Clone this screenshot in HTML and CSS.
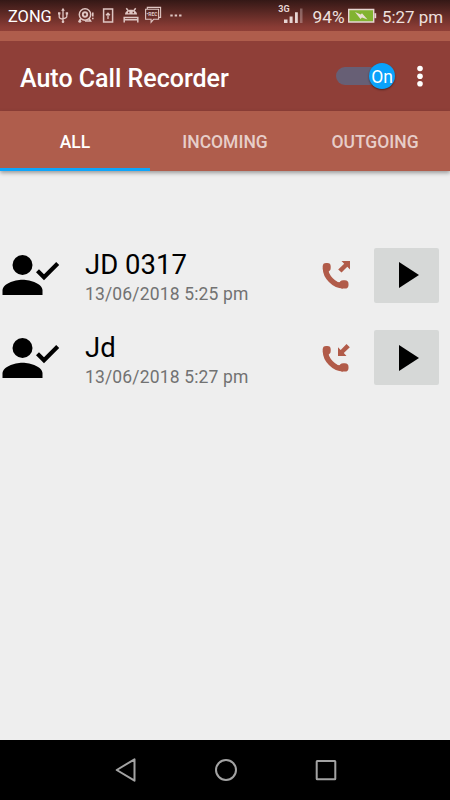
FILE: index.html
```html
<!DOCTYPE html>
<html lang="en">
<head>
<meta charset="utf-8">
<title>Auto Call Recorder</title>
<link rel="stylesheet" href="styles.css">
</head>
<body>
<svg class="defs" aria-hidden="true">
  <symbol id="person" viewBox="0 0 60 50">
    <circle cx="22.5" cy="15" r="10"/>
    <path d="M2.500 45v-4.500C2.500 34 14 29.800 22.500 29.800S42.500 34 42.500 40.500V45z"/>
    <path d="M37.500 20.700l6.500 6.500L57.700 13.500" fill="none" stroke="#000" stroke-width="4.200"/>
  </symbol>
  <symbol id="handset" viewBox="0 0 30 30">
    <path d="M4.500 8.500C4.500 16.500 13 25.900 22 25.900" fill="none" stroke="#b15b49" stroke-width="5.400"/>
    <rect x="1.700" y="3" width="8" height="8.400" rx="3.400"/>
    <rect x="18.500" y="20.300" width="9" height="8.300" rx="3.700"/>
    <path d="M8.800 9.500C6.800 11 7 12.800 8.200 14.500L5 13zM20 21.200C18 23 16.500 22.500 15 21.500L17 26z"/>
  </symbol>
  <symbol id="play" viewBox="0 0 20 26"><path d="M0 0v26L20 13z"/></symbol>
</svg>
<header class="status">
  <div class="status-left">
    <span class="carrier">ZONG</span>
    <svg class="notices" viewBox="56 0 130 31" fill="none" stroke="#dfc6c3" stroke-width="1.300">
      <path d="M63 9.500v13M59.200 13.500v3.300q0 2 3.800 2.300M66.800 13v3.300q0 2-3.800 2.300"/>
      <path d="M63 7.800l-1.800 3h3.600z" fill="#dfc6c3" stroke="none"/>
      <circle cx="63" cy="21.700" r="1.300" fill="#dfc6c3" stroke="none"/>
      <path d="M58 12.200h2.400v2.300H58zM65.700 12.200h2.400v2.300h-2.400z" fill="#dfc6c3" stroke="none"/>
      <circle cx="85" cy="14.500" r="5.700" stroke-width="1.500"/><circle cx="85" cy="14.500" r="2.200" stroke-width="1.900"/>
      <path d="M89 18.500l1.500 2.500h-5.500M81 18.500l-1.500 2M92.800 12.500v4M92.800 17.800v1.500" stroke-width="1.600"/>
      <circle cx="79.800" cy="21.200" r="1.500" fill="#dfc6c3" stroke="none"/>
      <path d="M103.600 8.900h9v13h-9z" stroke-width="1.500"/><path d="M108 19v-5.500M106 15.200l2-2 2 2"/>
      <path d="M125 14.500c0-6.500 12-6.500 12 0z" fill="#dfc6c3" stroke="none"/>
      <path d="M126.300 8.200l2 2.500M135.700 8.200l-2 2.500M124.200 22.500v-5h13.600v5M124.200 19.700h13.600" stroke-width="1.500"/>
      <path d="M128 12.500h1.400M132.600 12.500h1.400" stroke="#6b2e29" stroke-width="1.400"/>
      <path d="M145.600 9.300h13v10h-5l-2.500 3v-3h-5.500zM147.300 9V7.400h13.300v10H159" stroke-width="1.100"/>
      <text class="rec" x="146.400" y="16.300">•REC</text>
      <path d="M170.300 15.600h2.400M174.700 15.600h2.400M179.100 15.600h2.400" stroke-width="2"/>
    </svg>
  </div>
  <div class="status-right">
    <svg class="signal" viewBox="278 0 26 31" fill="#e7d5d3">
      <text class="network" x="278.300" y="11.700">3G</text>
      <path d="M284 19.500h3.500V23H284zM289.600 16.500h3V23h-3zM295 12.200h2.800V23H295z"/>
      <path d="M300 8.500h2.500V23H300z" opacity=".35"/>
    </svg>
    <span class="percent">94%</span>
    <svg class="battery" viewBox="348 0 30 31">
      <path d="M348.700 9.500h25v12.500h-25z" fill="#82b331" stroke="#e7d5d3" stroke-width="1.400"/>
      <path d="M374.400 13.200h1.800v5h-1.800z" fill="#e7d5d3"/>
      <path d="M355 12l5.700 2.400 1.300-1.200 5.500 6.300-5.500-2-1.500 1.400z" fill="#eadfd5"/>
    </svg>
    <span class="clock">5:27 pm</span>
  </div>
</header>
<div class="strip"></div>
<div class="appbar">
  <h1>Auto Call Recorder</h1>
  <div class="switch"><span class="thumb">On</span></div>
  <svg class="more" viewBox="0 0 6 22" fill="#fff"><circle cx="3" cy="3.500" r="2.800"/><circle cx="3" cy="11.200" r="2.800"/><circle cx="3" cy="18.800" r="2.800"/></svg>
</div>
<nav class="tabs">
  <div class="tab active"><span>ALL</span></div>
  <div class="tab"><span>INCOMING</span></div>
  <div class="tab"><span>OUTGOING</span></div>
</nav>
<main>
  <div class="row">
    <svg class="person"><use href="#person"/></svg>
    <div class="info"><div class="name">JD 0317</div><div class="date">13/06/2018 5:25 pm</div></div>
    <svg class="call" viewBox="0 0 30 30"><use href="#handset"/><path d="M20.500 1H29V9.500L26.300 6.800 20.500 12.600 17.200 9.500 23.200 3.700z"/></svg>
    <div class="play"><svg><use href="#play"/></svg></div>
  </div>
  <div class="row">
    <svg class="person"><use href="#person"/></svg>
    <div class="info"><div class="name">Jd</div><div class="date">13/06/2018 5:27 pm</div></div>
    <svg class="call" viewBox="0 0 30 30"><use href="#handset"/><path d="M17 4.200V12.900H25.500L22.800 10.100 28.800 4.200 25.500 1.100 19.700 7z"/></svg>
    <div class="play"><svg><use href="#play"/></svg></div>
  </div>
</main>
<footer>
  <svg viewBox="0 0 24 24"><path d="M2.700 12L20.500 1.300V22.700z"/></svg>
  <svg viewBox="0 0 24 24"><circle cx="12" cy="12" r="10"/></svg>
  <svg viewBox="0 0 24 24"><rect x="2.700" y="3" width="18.600" height="18.300" rx=".5"/></svg>
</footer>
</body>
</html>
```
FILE: styles.css
```css
* { box-sizing: border-box; }
body {
  margin: 0;
  width: 450px;
  height: 800px;
  display: flex;
  flex-direction: column;
  overflow: hidden;
  background: #eee;
  font-family: Roboto, sans-serif;
}
svg { display: block; flex: none; }
.defs { position: absolute; width: 0; height: 0; }
.status {
  height: 31px;
  flex: none;
  display: flex;
  justify-content: space-between;
  padding: 0 8px;
  background: linear-gradient(#341816, #8a3c35 88%, #8f3f37);
  color: #eee0de;
  white-space: nowrap;
}
.status-left, .status-right { display: flex; line-height: 34px; }
.carrier { width: 48px; font-size: 16.400px; color: #fff; }
.notices { width: 130px; height: 31px; }
.rec { font: bold 5px Roboto, sans-serif; fill: #dfc6c3; stroke: none; }
.signal { width: 26px; height: 31px; margin-right: 8.500px; }
.network { font: bold 9px Roboto, sans-serif; }
.percent { width: 35.500px; font-size: 17.300px; }
.battery { width: 30px; height: 31px; margin-right: 4px; }
.clock { width: 60px; font-size: 16.900px; }
.strip { height: 10px; flex: none; background: #af5d4c; }
.appbar {
  height: 70px;
  flex: none;
  display: flex;
  align-items: center;
  padding: 0 27px 0 20px;
  background: #8f3f38;
  color: #fff;
}
h1 { margin: 4px auto 0 0; font-size: 25px; font-weight: 500; white-space: nowrap; }
.switch {
  width: 59px;
  height: 18px;
  display: flex;
  align-items: center;
  justify-content: flex-end;
  border-radius: 9px;
  background: linear-gradient(90deg, #675f75 50px, transparent 50px);
  margin-right: 22px;
}
.thumb {
  width: 26px;
  height: 26px;
  border-radius: 50%;
  background: #0aa2fb;
  box-shadow: 0 1px 2px rgba(0, 0, 0, .45);
  text-align: center;
  font-size: 17.500px;
  line-height: 28px;
}
.more { width: 6px; height: 22px; }
.tabs {
  height: 60px;
  flex: none;
  display: grid;
  grid-template-columns: repeat(3, 1fr);
  background: #af5d4c;
  box-shadow: 0 2px 4px rgba(0, 0, 0, .35);
}
.tab {
  display: flex;
  align-items: center;
  justify-content: center;
  padding-top: 5px;
  border-bottom: 3px solid transparent;
  color: #e7cec9;
  font-size: 17.500px;
  font-weight: 500;
}
.active { color: #fff; border-color: #0da5fb; }
main { flex: 1; padding-top: 63px; }
.row { height: 82.500px; display: flex; align-items: center; padding-right: 11px; }
.person { width: 60px; height: 50px; }
.info { margin: 7px 0 0 25px; width: 236px; white-space: nowrap; }
.name { font-size: 27.500px; line-height: 32px; color: #000; }
.date { font-size: 17.500px; line-height: 27px; letter-spacing: .16px; color: #727272; }
.call { width: 30px; height: 30px; fill: #b15b49; }
.play {
  width: 65px;
  height: 55px;
  margin-left: auto;
  display: flex;
  align-items: center;
  justify-content: center;
  padding-left: 5px;
  border-radius: 2px;
  background: #d6d8d7;
}
.play svg { width: 20px; height: 26px; }
footer {
  height: 60px;
  flex: none;
  display: flex;
  align-items: center;
  justify-content: center;
  gap: 76px;
  padding-left: 1px;
  background: #000;
}
footer svg { width: 24px; height: 24px; fill: none; stroke: #a3a3a3; stroke-width: 2; stroke-linejoin: round; }
```
